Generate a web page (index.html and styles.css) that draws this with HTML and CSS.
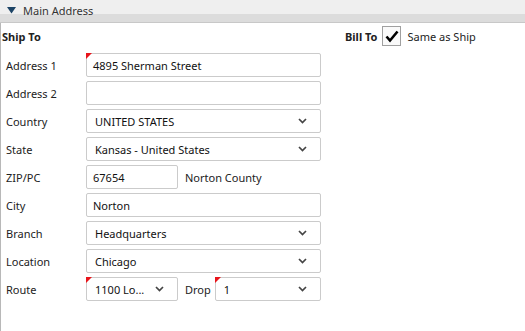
FILE: index.html
```html
<!DOCTYPE html>
<html>
<head>
<meta charset="utf-8">
<link rel="stylesheet" href="styles.css">
</head>
<body>
<div class="header">
  <svg class="tri" width="9" height="7" viewBox="0 0 9 7"><polygon points="0,0 9,0 4.5,6.5" fill="#1d4466"/></svg>
  <span class="htitle">Main Address</span>
</div>
<div class="panel">
  <div class="toprow">
    <div class="shipto">Ship To</div>
    <div class="billto">
      <span class="bold">Bill To</span>
      <span class="checkbox"><svg width="14" height="13" viewBox="0 0 14 13"><path d="M1.5 6.5 L5 10.5 L12.5 1.5" fill="none" stroke="#000" stroke-width="2.6"/></svg></span>
      <span>Same as Ship</span>
    </div>
  </div>
  <div class="form">
    <div class="label">Address 1</div>
    <div class="field req">4895 Sherman Street</div>

    <div class="label">Address 2</div>
    <div class="field"></div>

    <div class="label">Country</div>
    <div class="field select">UNITED STATES<svg class="chev" width="9" height="6" viewBox="0 0 9 6"><path d="M1 1 L4.5 4.5 L8 1" fill="none" stroke="#444" stroke-width="1.7"/></svg></div>

    <div class="label">State</div>
    <div class="field select">Kansas - United States<svg class="chev" width="9" height="6" viewBox="0 0 9 6"><path d="M1 1 L4.5 4.5 L8 1" fill="none" stroke="#444" stroke-width="1.7"/></svg></div>

    <div class="label">ZIP/PC</div>
    <div class="inline">
      <div class="field small">67654</div>
      <span class="county">Norton County</span>
    </div>

    <div class="label">City</div>
    <div class="field">Norton</div>

    <div class="label">Branch</div>
    <div class="field select">Headquarters<svg class="chev" width="9" height="6" viewBox="0 0 9 6"><path d="M1 1 L4.5 4.5 L8 1" fill="none" stroke="#444" stroke-width="1.7"/></svg></div>

    <div class="label">Location</div>
    <div class="field select">Chicago<svg class="chev" width="9" height="6" viewBox="0 0 9 6"><path d="M1 1 L4.5 4.5 L8 1" fill="none" stroke="#444" stroke-width="1.7"/></svg></div>

    <div class="label">Route</div>
    <div class="inline">
      <div class="field select small req">1100 Lo...<svg class="chev" width="9" height="6" viewBox="0 0 9 6"><path d="M1 1 L4.5 4.5 L8 1" fill="none" stroke="#444" stroke-width="1.7"/></svg></div>
      <span class="drop">Drop</span>
      <div class="field select grow req">1<svg class="chev" width="9" height="6" viewBox="0 0 9 6"><path d="M1 1 L4.5 4.5 L8 1" fill="none" stroke="#444" stroke-width="1.7"/></svg></div>
    </div>
  </div>
</div>
</body>
</html>
```

FILE: styles.css
```css
html, body {
  margin: 0;
  padding: 0;
  background: #fff;
  width: 525px;
  height: 331px;
  overflow: hidden;
  font-family: "Noto Sans", "Open Sans", sans-serif;
  font-size: 11px;
  color: #222;
}

.header {
  height: 22px;
  border-bottom: 1px solid #c8c8c8;
  background: linear-gradient(#efefef 0, #efefef 14px, #dcdcdc 14px, #dcdcdc 22px);
  display: flex;
  align-items: center;
  padding-left: 7px;
  box-sizing: content-box;
}

.tri {
  display: block;
  margin-top: -2px;
}

.htitle {
  margin-left: 7px;
  margin-top: -1px;
  color: #333;
}

.panel {
  border-left: 1px solid #b8b8b8;
  height: 308px;
}

.toprow {
  height: 26px;
  display: flex;
  align-items: center;
}

.shipto {
  font-weight: bold;
  width: 343px;
  padding-left: 1px;
}

.bold {
  font-weight: bold;
}

.billto {
  display: flex;
  align-items: center;
}

.checkbox {
  width: 17px;
  height: 18px;
  border: 1px solid #a0a0a0;
  background: #fafafa;
  display: flex;
  align-items: center;
  justify-content: center;
  margin: 0 6px 0 5px;
}

.form {
  margin-top: 4px;
  padding-left: 5px;
  display: grid;
  grid-template-columns: 80px 235px;
  grid-auto-rows: 24px;
  row-gap: 4px;
}

.label {
  display: flex;
  align-items: center;
}

.field {
  position: relative;
  box-sizing: border-box;
  height: 24px;
  border: 1px solid #cbcbcb;
  border-radius: 2px;
  display: flex;
  align-items: center;
  padding-left: 6px;
  color: #111;
  background: #fff;
}

.field.select {
  padding-left: 8px;
  padding-right: 13px;
  justify-content: space-between;
}

.req::before {
  content: "";
  position: absolute;
  left: -1px;
  top: -1px;
  border-top: 6px solid #e8141b;
  border-right: 6px solid transparent;
}

.inline {
  display: flex;
  align-items: center;
}

.small {
  width: 92px;
}

.county {
  margin-left: 7px;
}

.drop {
  margin-left: 7px;
  margin-right: 4px;
}

.grow {
  flex: 1;
  padding-left: 10px;
}
```
